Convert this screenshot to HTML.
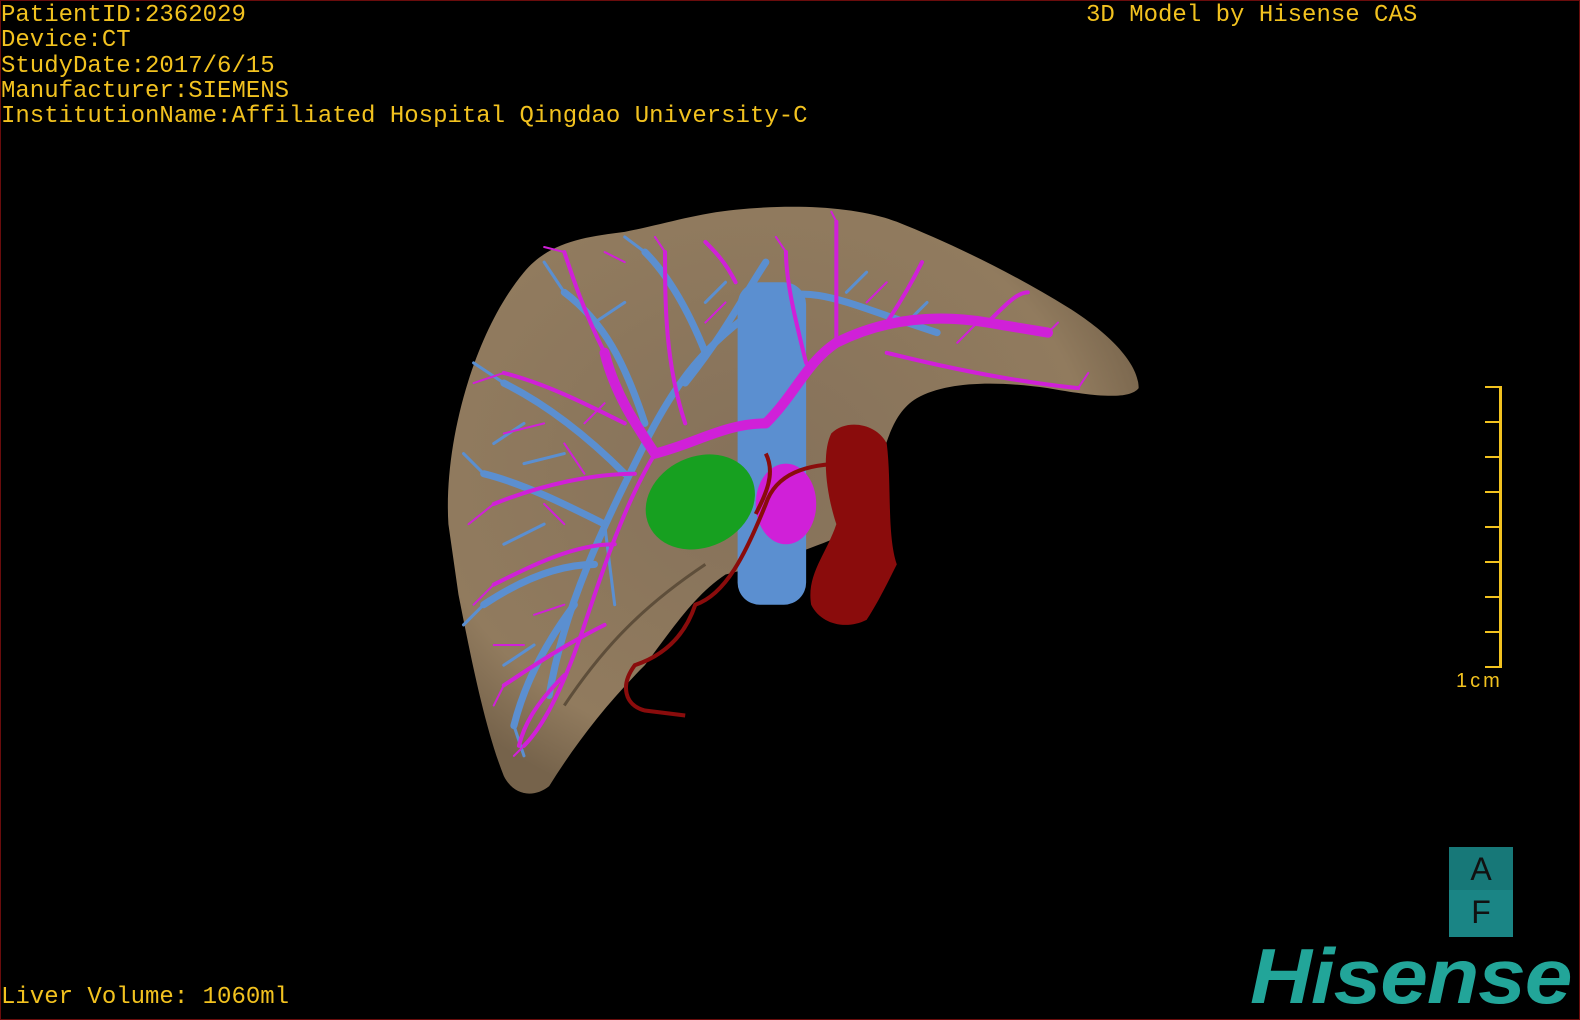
<!DOCTYPE html>
<html><head><meta charset="utf-8"><style>
html,body{margin:0;padding:0;background:#000;}
#v{position:relative;width:1580px;height:1020px;overflow:hidden;background:#000;}
#frame{position:absolute;left:0;top:0;width:1578px;height:1018px;border:1px solid #6a0c0c;}
.t{position:absolute;color:#f2c21f;font-family:"Liberation Mono",monospace;font-size:24px;letter-spacing:0px;line-height:25.3px;white-space:pre;}
svg{position:absolute;left:0;top:0;}
</style></head><body><div id="v">
<svg width="1580" height="1020" viewBox="0 0 1568 1012">
<defs><radialGradient id="lg" cx="0.45" cy="0.45" r="0.6"><stop offset="0" stop-color="#85715a"/><stop offset="0.8" stop-color="#917b5e"/><stop offset="1" stop-color="#76634b"/></radialGradient></defs>
<path d="M445,520 C440,440 470,330 520,270 C545,240 580,235 620,230 C660,222 690,212 730,208 C790,202 850,205 890,220 C940,240 1000,268 1060,305 C1100,330 1130,360 1130,385 C1120,398 1080,392 1040,385 C990,378 940,378 910,395 C885,410 880,440 870,470 L860,520 C820,540 760,560 720,570 C690,590 670,620 640,660 C600,700 570,740 545,780 C530,792 510,790 500,770 C480,720 465,640 455,590 Z" fill="url(#lg)"/>
<path d="M560,700 C600,640 640,600 700,560" stroke="#5e4e3a" stroke-width="3" fill="none"/>
<g fill="none" stroke-linecap="round">
<g stroke="#5b8fd0" stroke-width="7">
<path d="M545,690 C560,600 600,520 640,440 C670,380 700,340 760,300"/>
<path d="M620,470 C580,430 540,400 500,380"/><path d="M600,520 C560,500 520,480 480,470"/>
<path d="M590,560 C550,560 510,580 480,600"/><path d="M640,420 C620,360 600,320 560,290"/>
<path d="M700,350 C680,300 660,270 640,250"/><path d="M760,300 C800,280 840,300 900,320 L930,330"/>
<path d="M570,600 C540,640 520,680 510,720"/><path d="M680,380 C720,330 740,290 760,260"/>
</g>
<g stroke="#5b8fd0" stroke-width="3">
<path d="M500,380 L470,360 M480,470 L460,450 M480,600 L460,620 M560,290 L540,260 M640,250 L620,235 M900,320 L920,300 M510,720 L520,750 M530,640 L500,660 M600,520 L610,600 M520,420 L490,440 M540,520 L500,540 M560,450 L520,460 M620,300 L590,320 M700,300 L720,280 M840,290 L860,270"/>
</g>
<rect x="732" y="280" width="68" height="320" rx="22" fill="#5b8fd0"/>
<g stroke="#d020d8" stroke-width="10">
<path d="M760,420 C790,390 800,360 830,340 C870,320 920,310 980,320 L1040,330"/>
<path d="M760,420 C720,420 690,440 650,450 C630,420 610,390 600,350"/>
</g>
<g stroke="#d020d8" stroke-width="4">
<path d="M650,450 C620,500 600,560 580,620 C560,680 540,720 520,740"/>
<path d="M620,420 C580,400 540,380 500,370"/><path d="M630,470 C590,470 540,480 490,500"/>
<path d="M610,540 C570,540 530,560 490,580"/><path d="M600,350 C580,310 570,280 560,250"/>
<path d="M680,420 C660,360 660,300 660,250"/><path d="M800,360 C790,320 780,280 780,250"/>
<path d="M830,340 C830,300 830,260 830,220"/><path d="M880,320 C900,290 910,270 915,260"/>
<path d="M880,350 C960,370 1020,380 1070,385"/><path d="M980,320 C1000,300 1010,290 1020,290"/>
<path d="M600,620 C560,640 530,660 500,680"/><path d="M560,670 C530,700 520,720 515,740"/>
<path d="M730,280 C720,260 710,250 700,240"/>
</g>
<g stroke="#d020d8" stroke-width="2">
<path d="M500,370 L470,380 M490,500 L465,520 M490,580 L470,600 M560,250 L540,245 M660,250 L650,235 M780,250 L770,235 M830,220 L825,210 M500,680 L490,700 M520,740 L510,750 M1070,385 L1080,370 M1040,330 L1050,320 M540,420 L500,430 M560,600 L530,610 M580,470 L560,440 M560,520 L540,500 M600,400 L580,420 M700,320 L720,300 M860,300 L880,280 M950,340 L970,320 M620,260 L600,250 M520,640 L490,640"/>
</g>
</g>
<ellipse cx="780" cy="500" rx="30" ry="40" fill="#d020d8"/>
<ellipse cx="695" cy="498" rx="56" ry="45" transform="rotate(-25 695 498)" fill="#17a020"/>
<g fill="#8a0c0c">
<path d="M825,430 C840,415 870,420 880,440 C885,480 880,530 890,560 C880,580 870,600 860,615 C840,625 815,620 805,600 C800,570 820,550 830,520 C820,490 815,450 825,430 Z"/>
</g>
<g fill="none" stroke="#8a0c0c" stroke-width="4">
<path d="M840,460 C800,460 770,470 760,500 C740,550 720,590 690,600 C680,630 660,650 630,660 C615,680 620,700 640,705 L680,710"/>
<path d="M760,450 C770,470 760,490 750,510"/>
</g>
</svg>
<div id="frame"></div>
<div class="t" style="left:1px;top:3px;">PatientID:2362029
Device:CT
StudyDate:2017/6/15
Manufacturer:SIEMENS
InstitutionName:Affiliated Hospital Qingdao University-C</div>
<div class="t" style="left:1086px;top:3px;">3D Model by Hisense CAS</div>
<div class="t" style="left:1px;top:985px;">Liver Volume: 1060ml</div>
<div style="position:absolute;left:1499px;top:386px;width:3px;height:282px;background:#f2c21f;"></div>
<div style="position:absolute;left:1485px;top:386px;width:16px;height:282px;background:repeating-linear-gradient(to bottom,#f2c21f 0,#f2c21f 2px,transparent 2px,transparent 35px);"></div>
<div style="position:absolute;left:1456px;top:670px;color:#f2c21f;font:20px 'Liberation Sans',sans-serif;letter-spacing:3px;">1cm</div>
<div style="position:absolute;left:1449px;top:847px;width:64px;height:90px;background:#1a8585;">
<div style="height:43px;background:#177878;text-align:center;font:32px 'Liberation Sans',sans-serif;color:#111;line-height:44px;">A</div>
<div style="text-align:center;font:32px 'Liberation Sans',sans-serif;color:#111;line-height:44px;">F</div></div>
<div style="position:absolute;left:1250px;top:936px;color:#22a599;font:italic bold 78px 'Liberation Sans',sans-serif;letter-spacing:-1px;line-height:80px;transform:scaleX(1.1);transform-origin:left;">Hisense</div>
</div></body></html>
